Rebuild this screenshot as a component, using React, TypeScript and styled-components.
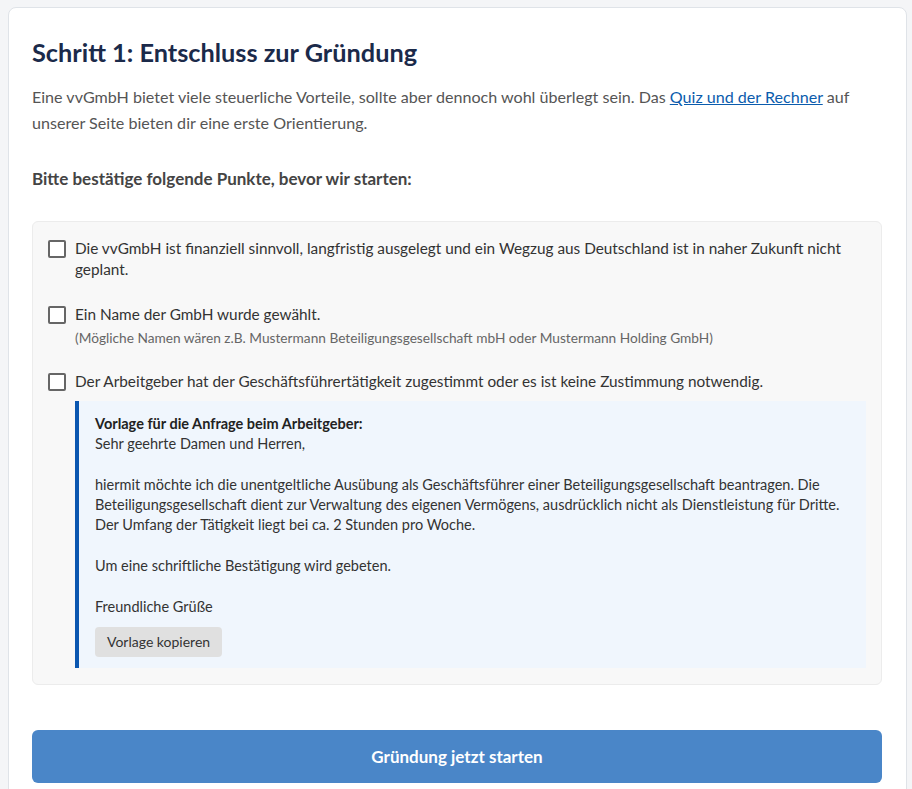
import React, { useState } from "react";
import styled, { createGlobalStyle } from "styled-components";

const GlobalStyle = createGlobalStyle`
  body {
    margin: 0;
    background: #f4f5f7;
    font-family: "Segoe UI", Lato, "Noto Sans", "Liberation Sans", sans-serif;
  }
`;

const Page = styled.div`
  padding: 7px 5px 0 8px;
`;

const Card = styled.section`
  background: #fff;
  border: 1px solid #dfe3e8;
  border-radius: 8px;
  padding: 26px 24px 24px 23px;
`;

const Title = styled.h2`
  margin: 0 0 14px;
  font-size: 25.3px;
  line-height: 36px;
  font-weight: 700;
  color: #1b2a4a;
`;

const Intro = styled.p`
  margin: 0 0 31px;
  font-size: 16.1px;
  line-height: 26px;
  color: #555;
`;

const Link = styled.a`
  color: #0b5cad;
  text-decoration: underline;
`;

const Lead = styled.p`
  margin: 0 0 30px;
  font-size: 17px;
  line-height: 24px;
  font-weight: 700;
  color: #444;
`;

const CheckList = styled.div`
  display: flex;
  flex-direction: column;
  gap: 24px;
  background: #f8f8f8;
  border: 1px solid #ececec;
  border-radius: 6px;
  padding: 16px 15px 16px 15px;
`;

const Item = styled.label`
  display: flex;
  align-items: flex-start;
  gap: 9px;
  font-size: 15.35px;
  line-height: 21px;
  color: #333;
  cursor: pointer;
`;

const Box = styled.input`
  appearance: none;
  flex: none;
  width: 18px;
  height: 18px;
  margin: 2px 0 0;
  border: 2px solid #666;
  border-radius: 2px;
  background: #fff;
  cursor: pointer;

  &:checked {
    background: #0b57b0;
    border-color: #0b57b0;
  }
`;

const ItemBody = styled.div`
  display: flex;
  flex-direction: column;
  gap: 4px;
  flex: 1;
`;

const Hint = styled.span`
  font-size: 13.7px;
  line-height: 18px;
  color: #666;
`;

const Template = styled.div`
  margin: -15px 0 0 27px;
  background: #f0f6fd;
  border-left: 4px solid #0b57b0;
  padding: 13px 16px 11px 16px;
  font-size: 14.5px;
  line-height: 20.3px;
  color: #333;
`;

const TemplateHead = styled.strong`
  display: block;
  font-weight: 700;
  color: #222;
`;

const Letter = styled.div`
  white-space: pre-line;
`;

const CopyButton = styled.button`
  display: block;
  height: 30px;
  margin-top: 10px;
  padding: 0 12px;
  border: none;
  border-radius: 4px;
  background: #e0e0e0;
  font: inherit;
  font-size: 14px;
  color: #333;
  cursor: pointer;
`;

const StartButton = styled.button`
  display: block;
  width: 100%;
  margin-top: 45px;
  height: 53px;
  border: none;
  border-radius: 6px;
  background: #4a86c8;
  color: #fff;
  font: inherit;
  font-size: 17px;
  font-weight: 700;
  cursor: pointer;
`;

const letter = `Sehr geehrte Damen und Herren,

hiermit möchte ich die unentgeltliche Ausübung als Geschäftsführer einer Beteiligungsgesellschaft beantragen. Die Beteiligungsgesellschaft dient zur Verwaltung des eigenen Vermögens, ausdrücklich nicht als Dienstleistung für Dritte. Der Umfang der Tätigkeit liegt bei ca. 2 Stunden pro Woche.

Um eine schriftliche Bestätigung wird gebeten.

Freundliche Grüße`;

export default function App() {
  const [checked, setChecked] = useState([false, false, false]);

  const toggle = (index: number) =>
    setChecked((prev) => prev.map((v, i) => (i === index ? !v : v)));

  return (
    <Page>
      <GlobalStyle />
      <Card>
        <Title>Schritt 1: Entschluss zur Gründung</Title>
        <Intro>
          Eine vvGmbH bietet viele steuerliche Vorteile, sollte aber dennoch
          wohl überlegt sein. Das <Link href="#">Quiz und der Rechner</Link>{" "}
          auf unserer Seite bieten dir eine erste Orientierung.
        </Intro>
        <Lead>Bitte bestätige folgende Punkte, bevor wir starten:</Lead>
        <CheckList>
          <Item>
            <Box type="checkbox" checked={checked[0]} onChange={() => toggle(0)} />
            <ItemBody>
              Die vvGmbH ist finanziell sinnvoll, langfristig ausgelegt und ein
              Wegzug aus Deutschland ist in naher Zukunft nicht geplant.
            </ItemBody>
          </Item>
          <Item>
            <Box type="checkbox" checked={checked[1]} onChange={() => toggle(1)} />
            <ItemBody>
              Ein Name der GmbH wurde gewählt.
              <Hint>
                (Mögliche Namen wären z.B. Mustermann Beteiligungsgesellschaft
                mbH oder Mustermann Holding GmbH)
              </Hint>
            </ItemBody>
          </Item>
          <Item>
            <Box type="checkbox" checked={checked[2]} onChange={() => toggle(2)} />
            <ItemBody>
              Der Arbeitgeber hat der Geschäftsführertätigkeit zugestimmt oder es
              ist keine Zustimmung notwendig.
            </ItemBody>
          </Item>
          <Template>
            <TemplateHead>Vorlage für die Anfrage beim Arbeitgeber:</TemplateHead>
            <Letter>{letter}</Letter>
            <CopyButton type="button">Vorlage kopieren</CopyButton>
          </Template>
        </CheckList>
        <StartButton type="button">Gründung jetzt starten</StartButton>
      </Card>
    </Page>
  );
}
